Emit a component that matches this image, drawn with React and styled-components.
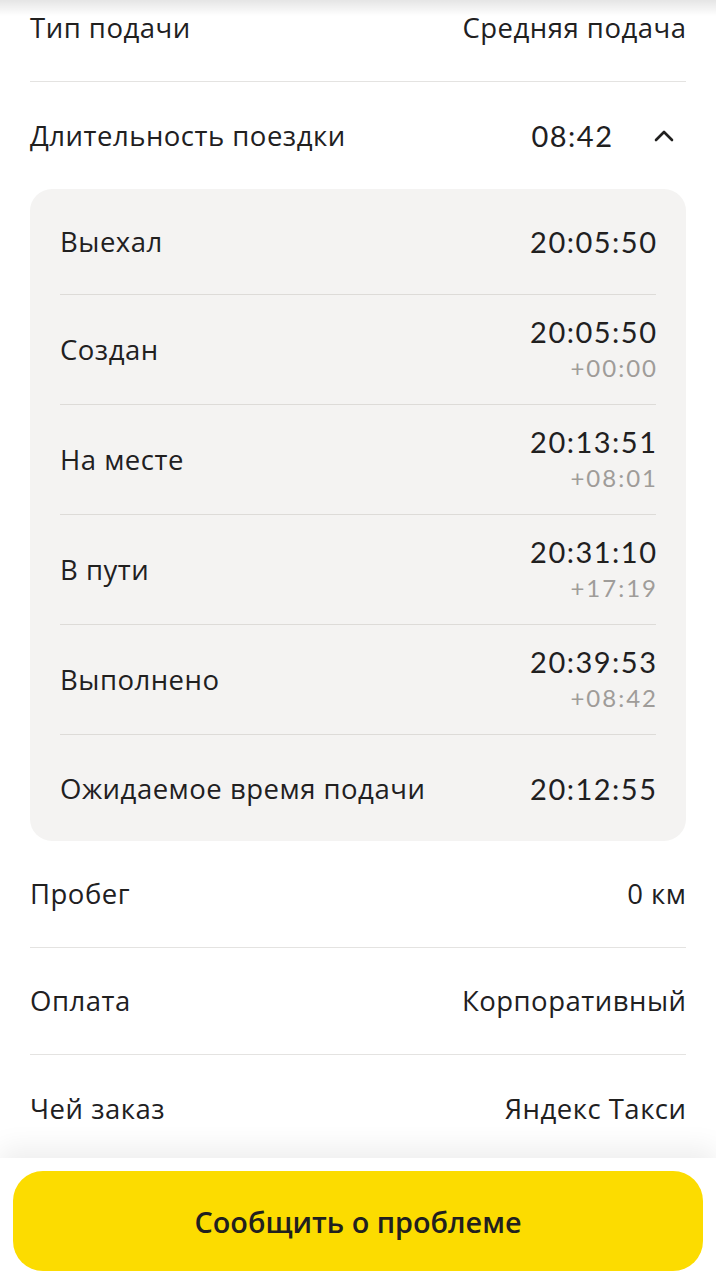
import React from "react";
import styled, { createGlobalStyle } from "styled-components";

const GlobalStyle = createGlobalStyle`
  html, body { margin: 0; padding: 0; background: #fff; }
  body { font-family: "Open Sans", "Noto Sans", sans-serif; color: #21201f; }
  * { box-sizing: border-box; }
`;

const Page = styled.div`
  position: relative;
  width: 716px;
  height: 1280px;
  overflow: hidden;
  background: #fff;
`;

const TopShade = styled.div`
  position: absolute;
  left: 0;
  right: 0;
  top: 0;
  height: 16px;
  background: linear-gradient(to bottom, rgba(0,0,0,0.10), rgba(0,0,0,0.0));
  pointer-events: none;
`;

const List = styled.div`
  display: flex;
  flex-direction: column;
  padding: 0 30px;
  margin-top: -25px;
`;

const Row = styled.div`
  display: flex;
  align-items: center;
  justify-content: space-between;
  height: 107px;
  border-bottom: ${(p) => (p.$last ? "none" : "1px solid #e4e3e1")};
  line-height: 36px;
`;

const Text = styled.span`
  color: #21201f;
  font-family: "Open Sans", "Noto Sans", sans-serif;
  font-size: 27.5px;
  letter-spacing: 0.5px;
  margin-right: ${(p) => (p.$end ? "-0.5px" : "0")};
`;

const Time = styled.span`
  color: #21201f;
  font-family: Lato, "Open Sans", sans-serif;
  font-size: 29px;
  line-height: 36px;
  letter-spacing: 1.5px;
  margin-right: -1.5px;
`;

const Right = styled.div`
  display: flex;
  align-items: center;
  gap: 40px;
`;

const Chevron = styled.svg`
  width: 24px;
  height: 24px;
  margin-right: 10px;
`;

const Card = styled.div`
  background: #f4f3f2;
  border-radius: 22px;
  padding: 0 30px;
  display: flex;
  flex-direction: column;
`;

const CardRow = styled.div`
  display: flex;
  align-items: center;
  justify-content: space-between;
  min-height: 106px;
  padding: 19px 0 18px;
  border-bottom: ${(p) => (p.$last ? "none" : "1px solid #dddbd8")};
  line-height: 36px;
`;

const Times = styled.div`
  display: flex;
  flex-direction: column;
  align-items: flex-end;
`;

const SubTime = styled.span`
  color: #9f9c99;
  font-family: Lato, "Open Sans", sans-serif;
  font-size: 24px;
  line-height: 36px;
  letter-spacing: 2px;
  margin-right: -2px;
`;

const BottomPanel = styled.div`
  position: absolute;
  left: 0;
  right: 0;
  bottom: 0;
  height: 122px;
  background: #fff;
  padding: 13px 13px 9px;
  box-shadow: 0 -10px 26px rgba(0, 0, 0, 0.07);
`;

const Button = styled.button`
  width: 100%;
  height: 100px;
  border: none;
  border-radius: 30px;
  background: #fcdc00;
  color: #21201f;
  font-family: "Open Sans", "Noto Sans", sans-serif;
  font-size: 28.8px;
  font-weight: 600;
  display: flex;
  align-items: center;
  justify-content: center;
`;

const steps = [
  { label: "Выехал", time: "20:05:50" },
  { label: "Создан", time: "20:05:50", sub: "+00:00" },
  { label: "На месте", time: "20:13:51", sub: "+08:01" },
  { label: "В пути", time: "20:31:10", sub: "+17:19" },
  { label: "Выполнено", time: "20:39:53", sub: "+08:42" },
  { label: "Ожидаемое время подачи", time: "20:12:55" },
];

export default function App() {
  return (
    <Page>
      <GlobalStyle />
      <List>
        <Row>
          <Text>Тип подачи</Text>
          <Text $end>Средняя подача</Text>
        </Row>
        <Row $last>
          <Text>Длительность поездки</Text>
          <Right>
            <Time>08:42</Time>
            <Chevron viewBox="0 0 24 24" fill="none">
              <path d="M4 16 L12 8 L20 16" stroke="#21201f" strokeWidth="2.6" strokeLinecap="round" strokeLinejoin="round" />
            </Chevron>
          </Right>
        </Row>
        <Card>
          {steps.map((s, i) => (
            <CardRow key={s.label} $last={i === steps.length - 1}>
              <Text>{s.label}</Text>
              <Times>
                <Time>{s.time}</Time>
                {s.sub && <SubTime>{s.sub}</SubTime>}
              </Times>
            </CardRow>
          ))}
        </Card>
        <Row>
          <Text>Пробег</Text>
          <Text $end>0 км</Text>
        </Row>
        <Row>
          <Text>Оплата</Text>
          <Text $end>Корпоративный</Text>
        </Row>
        <Row $last>
          <Text>Чей заказ</Text>
          <Text $end>Яндекс Такси</Text>
        </Row>
      </List>
      <TopShade />
      <BottomPanel>
        <Button>Сообщить о проблеме</Button>
      </BottomPanel>
    </Page>
  );
}
